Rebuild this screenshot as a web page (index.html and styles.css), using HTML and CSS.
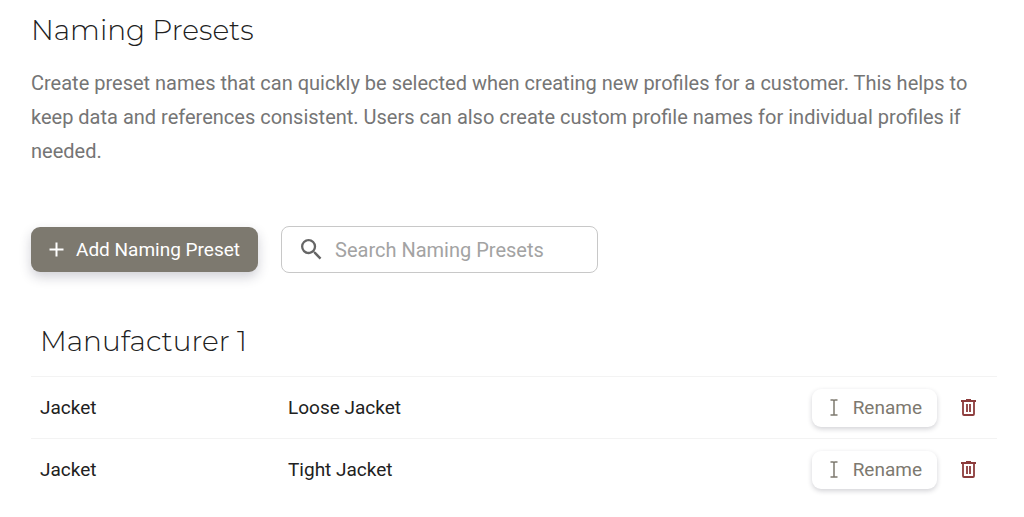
FILE: index.html
```html
<!DOCTYPE html>
<html lang="en">
<head>
<meta charset="utf-8">
<title>Naming Presets</title>
<link rel="stylesheet" href="styles.css">
</head>
<body>
<main class="page">
  <h1 class="title">Naming Presets</h1>
  <p class="intro">Create preset names that can quickly be selected when creating new profiles for a customer. This helps to keep data and references consistent. Users can also create custom profile names for individual profiles if needed.</p>
  <div class="toolbar">
    <button class="add" type="button">
      <svg class="add-icon" viewBox="0 0 15 15" aria-hidden="true"><path d="M7.5 0.5v14M0.5 7.5h14" stroke="currentColor" stroke-width="2" fill="none"/></svg>
      Add Naming Preset
    </button>
    <label class="search">
      <svg class="search-icon" viewBox="3 3 18 18" aria-hidden="true"><path fill="currentColor" d="M15.5 14h-.79l-.28-.27A6.47 6.47 0 0 0 16 9.5 6.5 6.5 0 1 0 9.5 16c1.61 0 3.09-.59 4.23-1.57l.27.28v.79l5 4.99L20.49 19l-4.99-5zm-6 0C7.01 14 5 11.99 5 9.5S7.01 5 9.5 5 14 7.01 14 9.5 11.99 14 9.5 14z"/></svg>
      <input class="search-input" type="text" placeholder="Search Naming Presets" aria-label="Search Naming Presets">
    </label>
  </div>
  <h2 class="group">Manufacturer 1</h2>
  <table class="presets">
    <tr>
      <td class="kind">Jacket</td>
      <td>Loose Jacket</td>
      <td class="actions"><div class="action-row">
        <button class="rename" type="button"><svg class="cursor-icon" viewBox="0 0 8 17" aria-hidden="true"><path d="M.5 1H3L4 1.7 5 1h2.5M.5 16H3l1-.7 1 .7h2.5M4 1.5v14" stroke="currentColor" stroke-width="1.5" fill="none"/></svg>Rename</button>
        <button class="delete" type="button" aria-label="Delete Loose Jacket"><svg class="trash-icon" viewBox="0 0 15 17" aria-hidden="true"><path d="M0 2h15M5 .8h5M2 2v13q0 1 1 1h9q1 0 1-1V2M6 5v8M9 5v8" stroke="currentColor" stroke-width="1.8" fill="none"/></svg></button>
      </div></td>
    </tr>
    <tr>
      <td class="kind">Jacket</td>
      <td>Tight Jacket</td>
      <td class="actions"><div class="action-row">
        <button class="rename" type="button"><svg class="cursor-icon" viewBox="0 0 8 17" aria-hidden="true"><path d="M.5 1H3L4 1.7 5 1h2.5M.5 16H3l1-.7 1 .7h2.5M4 1.5v14" stroke="currentColor" stroke-width="1.5" fill="none"/></svg>Rename</button>
        <button class="delete" type="button" aria-label="Delete Tight Jacket"><svg class="trash-icon" viewBox="0 0 15 17" aria-hidden="true"><path d="M0 2h15M5 .8h5M2 2v13q0 1 1 1h9q1 0 1-1V2M6 5v8M9 5v8" stroke="currentColor" stroke-width="1.8" fill="none"/></svg></button>
      </div></td>
    </tr>
  </table>
</main>
</body>
</html>
```

FILE: styles.css
```css
* { box-sizing: border-box; }
body { margin: 0; background: #fff; color: #212121; font-family: Roboto, sans-serif; font-size: 19px; }
.page { padding: 12px 27px 0 31px; }
.title, .group { margin: 0; font-family: Montserrat, Lato, sans-serif; font-weight: 300; font-size: 28px; line-height: 36px; }
.intro { margin: 18px 0 58px; color: #757575; font-size: 20px; line-height: 34px; }
.toolbar { display: flex; align-items: center; gap: 23px; }
button { font: inherit; border: 0; cursor: pointer; display: flex; align-items: center; }
.add { height: 45px; padding: 0 18px; gap: 12px; border-radius: 9px; background: #7d796f; color: #fff; box-shadow: 0 5px 12px rgba(40, 40, 70, .22); }
.add-icon { width: 15px; height: 15px; }
.search { display: flex; align-items: center; gap: 13px; width: 317px; height: 47px; padding: 0 19px; border: 1px solid #c8c8c8; border-radius: 8px; }
.search-icon { flex: none; width: 21px; height: 21px; color: #666; }
.search-input { flex: 1; min-width: 0; padding: 0; border: 0; outline: 0; background: none; font: inherit; font-size: 20px; color: #212121; }
.search-input::placeholder { color: #a3a3a3; opacity: 1; }
.group { margin: 50px 0 17px 9px; }
.presets { width: 100%; border-collapse: collapse; }
.presets td { height: 62px; padding: 0 9px; border-top: 1px solid #f3f3f3; }
.presets .kind { width: 248px; }
.presets .actions { width: 200px; padding-right: 21px; }
.action-row { display: flex; align-items: center; justify-content: flex-end; gap: 24px; }
.rename { height: 38px; padding: 0 15px 0 18px; gap: 15px; border-radius: 9px; background: #fff; color: #7d796f; box-shadow: 0 2px 5px rgba(30, 30, 50, .2); }
.cursor-icon { width: 8px; height: 17px; }
.delete { padding: 0; background: none; color: #8c3b3b; }
.trash-icon { width: 15px; height: 17px; }
```
